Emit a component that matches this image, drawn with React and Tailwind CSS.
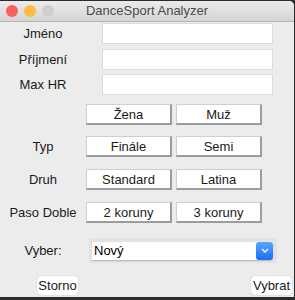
import React from 'react'

const font = { fontFamily: '"Liberation Sans", Arial, sans-serif' }

function Btn ({ children }) {
    return (
        <button className="w-[86px] h-[21px] bg-white border border-[#cfcfcf] border-r-[#9c9c9c] border-b-[#9c9c9c] border-r-2 border-b-2 text-[13px] text-[#1a1a1a] leading-none">
            {children}
        </button>
    )
}

function Field ({ label, className }) {
    return (
        <div className={`flex items-center ${className}`}>
            <div className="w-[86px] text-center text-[13px] text-[#1a1a1a]">{label}</div>
            <div className="ml-[16px] w-[171px] h-[21px] bg-white border border-[#dcdcdc]"></div>
        </div>
    )
}

function ButtonRow ({ label, a, b, className }) {
    return (
        <div className={`flex items-center ${className}`}>
            <div className="w-[86px] text-center text-[13px] text-[#1a1a1a]">{label}</div>
            <div className="flex gap-[4px]">
                <Btn>{a}</Btn>
                <Btn>{b}</Btn>
            </div>
        </div>
    )
}

export default function App () {
    return (
        <div className="w-[295px] h-[300px] bg-[#2b2b2b] pt-px" style={font}>
            <div className="w-[294px] h-[296px] bg-[#ececec] rounded-tr-[5px] overflow-hidden flex flex-col">
                <div className="relative h-[21px] flex items-center justify-center bg-gradient-to-b from-[#ebebeb] to-[#d5d5d5] border-b border-[#b5b5b5]">
                    <div className="absolute left-[6px] top-[4px] flex gap-[6px]">
                        <span className="w-[12px] h-[12px] rounded-full bg-[#fc605c]"></span>
                        <span className="w-[12px] h-[12px] rounded-full bg-[#fdbc40]"></span>
                        <span className="w-[12px] h-[12px] rounded-full bg-[#cfcfcf]"></span>
                    </div>
                    <span className="text-[13px] text-[#4a4a4a]">DanceSport Analyzer</span>
                </div>

                <Field label="Jméno" className="mt-[1px]" />
                <Field label="Příjmení" className="mt-[5px]" />
                <Field label="Max HR" className="mt-[4px]" />

                <ButtonRow label="" a="Žena" b="Muž" className="mt-[9px]" />
                <ButtonRow label="Typ" a="Finále" b="Semi" className="mt-[11px]" />
                <ButtonRow label="Druh" a="Standard" b="Latina" className="mt-[12px]" />
                <ButtonRow label="Paso Doble" a="2 koruny" b="3 koruny" className="mt-[12px]" />

                <div className="flex items-center mt-[15px]">
                    <div className="w-[86px] text-center text-[13px] text-[#1a1a1a]">Vyber:</div>
                    <div className="ml-[3px] w-[188px] h-[25px] bg-[#e3e3e3] flex items-center pl-[3px] pr-[4px]">
                        <div className="flex-1 h-[18px] bg-white flex items-center rounded-r-[3px] shadow-[0_1px_1px_rgba(0,0,0,0.2)]">
                            <span className="flex-1 pl-[2px] text-[13px] text-black">Nový</span>
                            <span className="w-[17px] h-[18px] rounded-[3px] bg-gradient-to-b from-[#5aa6ff] to-[#1a6cf2] flex items-center justify-center">
                                <svg width="8" height="5" viewBox="0 0 8 5"><path d="M1 1l3 3 3-3" stroke="white" strokeWidth="1.4" fill="none" /></svg>
                            </span>
                        </div>
                    </div>
                </div>

                <div className="flex justify-between mt-[13px] pl-[37px] pr-[2px]">
                    <button className="w-[41px] h-[19px] bg-white rounded-[4px] shadow-[0_0_1px_rgba(0,0,0,0.35)] text-[13px] text-[#1a1a1a] leading-none">Storno</button>
                    <button className="w-[41px] h-[19px] bg-white rounded-[4px] shadow-[0_0_1px_rgba(0,0,0,0.35)] text-[13px] text-[#1a1a1a] leading-none">Vybrat</button>
                </div>
            </div>
        </div>
    )
}
